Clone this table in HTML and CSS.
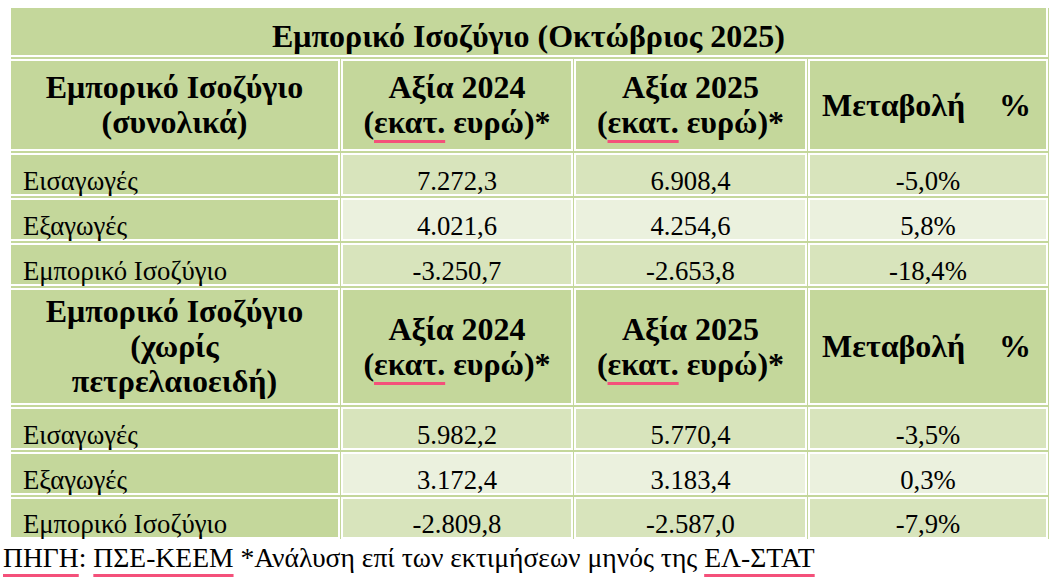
FILE: index.html
```html
<!DOCTYPE html>
<html lang="el">
<head>
  <meta charset="UTF-8" />
  <meta name="viewport" content="width=device-width, initial-scale=1" />
  <title>Εμπορικό Ισοζύγιο (Οκτώβριος 2025)</title>
  <link rel="stylesheet" href="styles.css">
</head>
<body>

  <div class="balance">
    <div class="cell title">Εμπορικό Ισοζύγιο (Οκτώβριος 2025)</div>

    <!-- total -->
    <div class="cell head"><div>Εμπορικό Ισοζύγιο<br>(συνολικά)</div></div>
    <div class="cell head"><div>Αξία 2024<br>(<span class="spell">εκατ.</span> ευρώ)*</div></div>
    <div class="cell head"><div>Αξία 2025<br>(<span class="spell">εκατ.</span> ευρώ)*</div></div>
    <div class="cell head change"><span>Μεταβολή</span><span>%</span></div>

    <div class="cell label">Εισαγωγές</div>
    <div class="cell num">7.272,3</div>
    <div class="cell num">6.908,4</div>
    <div class="cell num">-5,0%</div>

    <div class="cell label">Εξαγωγές</div>
    <div class="cell num pale">4.021,6</div>
    <div class="cell num pale">4.254,6</div>
    <div class="cell num pale">5,8%</div>

    <div class="cell label">Εμπορικό Ισοζύγιο</div>
    <div class="cell num">-3.250,7</div>
    <div class="cell num">-2.653,8</div>
    <div class="cell num">-18,4%</div>

    <!-- without oil products -->
    <div class="cell head"><div>Εμπορικό Ισοζύγιο<br>(χωρίς<br>πετρελαιοειδή)</div></div>
    <div class="cell head"><div>Αξία 2024<br>(<span class="spell">εκατ.</span> ευρώ)*</div></div>
    <div class="cell head"><div>Αξία 2025<br>(<span class="spell">εκατ.</span> ευρώ)*</div></div>
    <div class="cell head change"><span>Μεταβολή</span><span>%</span></div>

    <div class="cell label">Εισαγωγές</div>
    <div class="cell num">5.982,2</div>
    <div class="cell num">5.770,4</div>
    <div class="cell num">-3,5%</div>

    <div class="cell label">Εξαγωγές</div>
    <div class="cell num pale">3.172,4</div>
    <div class="cell num pale">3.183,4</div>
    <div class="cell num pale">0,3%</div>

    <div class="cell label">Εμπορικό Ισοζύγιο</div>
    <div class="cell num">-2.809,8</div>
    <div class="cell num">-2.587,0</div>
    <div class="cell num">-7,9%</div>
  </div>

  <p class="source"><span class="spell">ΠΗΓΗ</span>: <span class="spell">ΠΣΕ-ΚΕΕΜ</span> *Ανάλυση επί των εκτιμήσεων μηνός της <span class="spell">ΕΛ-ΣΤΑΤ</span></p>

</body>
</html>
```

FILE: styles.css
```css
body {
  margin: 0;
  background: #fff;
  color: #000;
  font-family: "Liberation Serif", "DejaVu Serif", serif;
  font-size: 26.7px;
}

.balance {
  display: grid;
  grid-template-columns: 327px 228px 229px 236px;
  grid-template-rows: 47px 88px 39px 39px 39px 113px 39px 39px 38px;
  column-gap: 5px;
  row-gap: 6px;
  width: 1040px;
  margin: 8px 0 0 11px;
  /* hide the outer grid lines, keep the inner ones */
  clip-path: inset(0 0 -2px 0);
}

.cell {
  background: #c4d79b;
  outline: 1px solid #c4d79b;
  outline-offset: 2px;
  display: flex;
  white-space: nowrap;
}

.title {
  grid-column: 1 / -1;
  justify-content: center;
  align-items: flex-end;
  padding-bottom: 3px;
  font-weight: bold;
  font-size: 32px;
  line-height: 32px;
}

.head {
  justify-content: center;
  align-items: center;
  text-align: center;
  font-weight: bold;
  font-size: 32px;
  line-height: 35px;
}

.head.change {
  justify-content: space-between;
  padding: 0 15px 0 12px;
}

.label {
  align-items: flex-end;
  padding-left: 12px;
  line-height: 26px;
}

.num {
  background: #d8e4bc;
  justify-content: center;
  align-items: flex-end;
  line-height: 26px;
}

.num.pale {
  background: #ebf1de;
}

.spell {
  text-decoration: underline;
  text-decoration-color: #f4507a;
  text-decoration-thickness: 3px;
  text-underline-offset: 7px;
  text-decoration-skip-ink: none;
}

.source {
  margin: 6px 0 0 3px;
  padding-bottom: 14px;
  font-size: 27.6px;
  line-height: 30px;
}
```
